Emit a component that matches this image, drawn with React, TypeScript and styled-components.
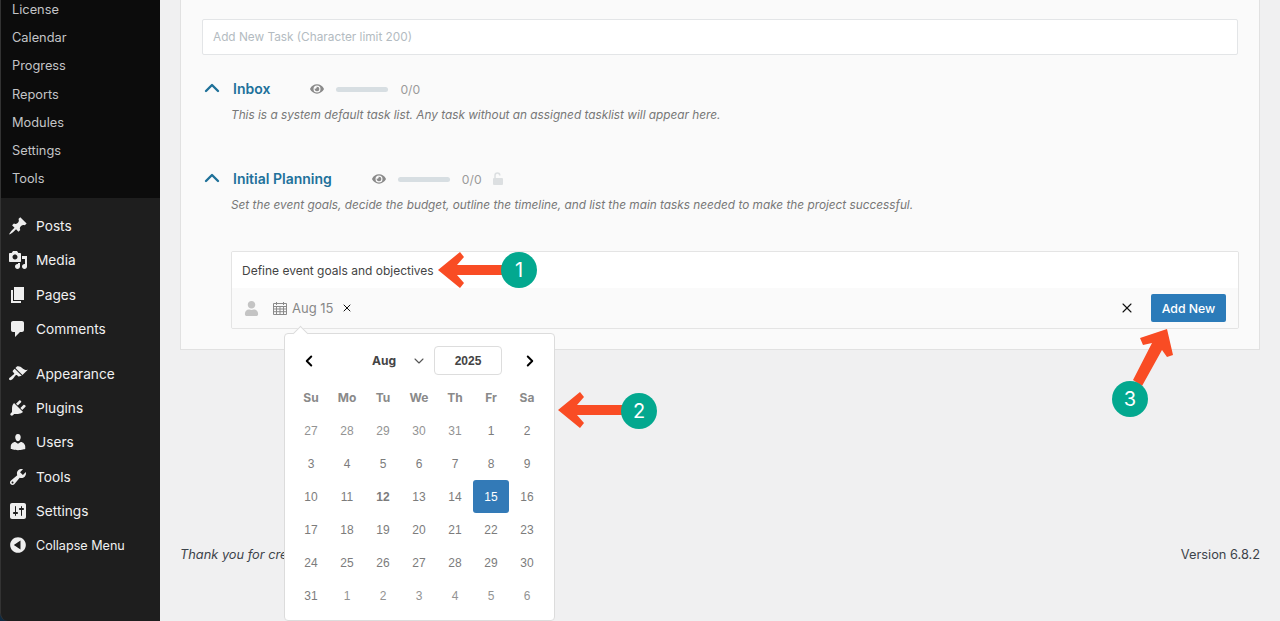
import React from "react";
import styled, { createGlobalStyle } from "styled-components";
import { FaEye, FaUser } from "react-icons/fa";
import { ChevronUp, ChevronLeft, ChevronRight, ChevronDown, X } from "lucide-react";

const Global = createGlobalStyle`
  html, body { margin: 0; padding: 0; height: 621px; overflow: hidden; background: #f0f0f1; }
  * { box-sizing: border-box; }
  #root { height: 621px; font-family: Inter, "Liberation Sans", sans-serif; }
`;

const Page = styled.div`
  position: relative;
  display: flex;
  width: 1280px;
  height: 621px;
  overflow: hidden;
`;
const SideWrap = styled.div`
  width: 160px;
  flex: none;
  background: #0f2b42;
`;
const Sidebar = styled.nav`
  height: 621px;
  background: #1e1e1e;
  border-left: 1px solid #333;
  border-bottom-left-radius: 8px;
  overflow: hidden;
`;
const SubMenu = styled.div`
  height: 198px;
  background: #0c0c0c;
  overflow: hidden;
  padding-left: 11px;
`;
const SubList = styled.div`
  margin-top: -4px;
`;
const SubItem = styled.div`
  height: 28.2px;
  line-height: 28.2px;
  font-size: 12.8px;
  color: #c3c4c7;
`;
const MenuList = styled.div`
  padding-top: 10.8px;
`;
const MenuItem = styled.div<{ $gap?: boolean }>`
  height: 34.3px;
  display: flex;
  align-items: center;
  gap: 8px;
  padding-left: 7px;
  margin-top: ${(p) => (p.$gap ? "10.7px" : "0")};
  font-size: 13.7px;
  color: #f0f0f1;
`;
const MenuIcon = styled.svg`
  width: 20px;
  height: 20px;
  flex: none;
  fill: #eeeeee;
`;
const CollapseLabel = styled.span`
  font-size: 12.6px;
`;

const Main = styled.main`
  flex: 1;
  min-width: 0;
  display: flex;
  flex-direction: column;
  padding: 0 20px;
  height: 621px;
`;
const Panel = styled.section`
  height: 351px;
  margin-top: -1px;
  flex: none;
  background: #fafafa;
  border: 1px solid #e1e1e1;
  padding: 19px 21px 0 21px;
`;
const TaskInput = styled.div`
  height: 36px;
  width: 1036px;
  background: #fff;
  border: 1px solid #e3e5e7;
  border-radius: 2px;
  padding-left: 10px;
  display: flex;
  align-items: center;
  font-size: 11.8px;
  color: #b3bbc1;
`;
const ListBlock = styled.div<{ $top: number }>`
  margin-top: ${(p) => p.$top}px;
  padding-left: 4px;
`;
const ListHead = styled.div`
  display: flex;
  align-items: center;
  height: 20px;
`;
const Caret = styled.span`
  width: 33px;
  margin-left: -6px;
  margin-top: -2px;
  flex: none;
  display: flex;
  color: #1f7199;
`;
const ListTitle = styled.span`
  font-size: 14px;
  font-weight: 600;
  color: #21719b;
  margin-right: 40px;
  margin-top: -2px;
`;
const Eye = styled.span`
  display: flex;
  color: #8a8a8a;
  font-size: 14px;
  margin-right: 12px;
`;
const Bar = styled.span`
  width: 52px;
  height: 5px;
  border-radius: 3px;
  background: #d7dee2;
  margin-right: 12px;
`;
const Count = styled.span`
  font-size: 12.2px;
  color: #9a9a9a;
`;
const LockIcon = styled.svg`
  width: 10px;
  height: 13px;
  margin-left: 11px;
  margin-top: -2px;
`;
const ListDesc = styled.p`
  margin: 8px 0 0 25px;
  font-size: 11.8px;
  line-height: 16px;
  font-style: italic;
  color: #777;
`;
const Form = styled.div`
  margin: 38px 0 0 25px;
  width: 1008px;
  height: 78px;
  border: 1px solid #e4e4e4;
  border-radius: 2px;
  overflow: hidden;
`;
const FormTitle = styled.div`
  height: 36px;
  background: #fff;
  padding-left: 10px;
  display: flex;
  align-items: center;
  font-size: 12px;
  color: #444;
`;
const FormBar = styled.div`
  height: 40px;
  background: #fafafa;
  display: flex;
  align-items: center;
  padding: 0 12px 0 12px;
`;
const Avatar = styled.span`
  display: flex;
  color: #c4c4c4;
  font-size: 15px;
  margin-right: 14px;
`;
const CalIcon = styled.svg`
  width: 14px;
  height: 14px;
  margin-right: 5px;
  fill: none;
  stroke: #8a8a8a;
  stroke-width: 1;
`;
const DateText = styled.span`
  font-size: 13px;
  color: #888;
  margin-right: 8px;
`;
const Remove = styled.span`
  display: flex;
  color: #111;
`;
const Spacer = styled.span`
  flex: 1;
`;
const Cancel = styled.span`
  display: flex;
  color: #111;
  margin-right: 16px;
`;
const AddButton = styled.button`
  width: 75px;
  height: 28px;
  border: 0;
  border-radius: 2px;
  background: #2b7bb9;
  color: #fff;
  font-family: inherit;
  font-size: 12.3px;
  font-weight: 500;
  padding: 0;
`;
const Footer = styled.footer`
  margin-top: 197px;
  display: flex;
  justify-content: space-between;
  font-size: 12.8px;
  line-height: 16px;
  color: #3c434a;
`;
const Thanks = styled.span`
  font-style: italic;
`;

const Popup = styled.div`
  position: absolute;
  left: 284px;
  top: 333px;
  width: 271px;
  height: 288px;
  background: #fff;
  border: 1px solid #dcdcdc;
  border-radius: 4px;
  padding: 0 8px;
  &::before {
    content: "";
    position: absolute;
    left: 10px;
    top: -6px;
    width: 10px;
    height: 10px;
    background: #fff;
    border-left: 1px solid #dcdcdc;
    border-top: 1px solid #dcdcdc;
    transform: rotate(45deg);
  }
`;
const CalHead = styled.div`
  height: 45px;
  margin-top: 4px;
  display: flex;
  align-items: center;
  font-size: 12px;
  font-weight: 700;
  color: #444;
`;
const NavIcon = styled.span<{ $left: number }>`
  display: flex;
  color: #000;
  margin-left: ${(p) => p.$left}px;
`;
const MonthName = styled.span`
  margin-left: 54px;
  margin-right: 15px;
`;
const Chevron = styled.span`
  display: flex;
  color: #555;
  margin-right: 7px;
`;
const YearBox = styled.span`
  width: 68px;
  height: 29px;
  border: 1px solid #ddd;
  border-radius: 4px;
  display: flex;
  align-items: center;
  justify-content: center;
  font-family: "Liberation Sans", Arial, sans-serif;
`;
const Grid = styled.div`
  display: grid;
  grid-template-columns: repeat(7, 36px);
`;
const WeekCell = styled.div`
  height: 31px;
  padding-bottom: 3px;
  display: flex;
  align-items: center;
  justify-content: center;
  font-size: 12px;
  font-weight: 700;
  color: #8a8a8a;
`;
const DayCell = styled.div<{ $muted?: boolean; $today?: boolean; $selected?: boolean }>`
  height: 33px;
  display: flex;
  align-items: center;
  justify-content: center;
  font-family: "Liberation Sans", Arial, sans-serif;
  font-size: 12px;
  border-radius: 3px;
  font-weight: ${(p) => (p.$today ? 700 : 400)};
  color: ${(p) => (p.$selected ? "#fff" : p.$muted ? "#939393" : "#7c7c7c")};
  background: ${(p) => (p.$selected ? "#337ab7" : "transparent")};
`;
const Arrows = styled.svg`
  position: absolute;
  left: 0;
  top: 0;
  width: 1280px;
  height: 621px;
  fill: #f94c24;
  pointer-events: none;
`;
const Badge = styled.span<{ $x: number; $y: number }>`
  position: absolute;
  left: ${(p) => p.$x - 18}px;
  top: ${(p) => p.$y - 18}px;
  width: 36px;
  height: 36px;
  border-radius: 50%;
  background: #03a88f;
  color: #fff;
  display: flex;
  align-items: center;
  justify-content: center;
  font-size: 20px;
`;

const sub = ["License", "Calendar", "Progress", "Reports", "Modules", "Settings", "Tools"];
const icons: Record<string, string> = {
  Posts: "M10.44 3.02l1.82-1.82 6.36 6.35-1.83 1.82c-1.05-.68-2.48-.57-3.41.36l-.75.75c-.92.93-1.04 2.35-.35 3.41l-1.83 1.82-2.41-2.41-2.8 2.79c-.42.42-3.38 2.71-3.8 2.29s1.86-3.39 2.28-3.81l2.79-2.79L4.1 9.36l1.83-1.82c1.05.69 2.48.57 3.4-.36l.75-.75c.93-.92 1.05-2.35.36-3.41z",
  Media: "M13 11V4c0-.55-.45-1-1-1h-1.67L9 1H5L3.67 3H2c-.55 0-1 .45-1 1v7c0 .55.45 1 1 1h10c.55 0 1-.45 1-1zM7 4.5c1.38 0 2.5 1.12 2.5 2.5S8.38 9.5 7 9.5 4.5 8.38 4.5 7 5.62 4.5 7 4.5zM14 6h5v10.5c0 1.38-1.12 2.5-2.5 2.5S14 17.88 14 16.5s1.12-2.5 2.5-2.5c.17 0 .34.02.5.05V9h-3V6zm-4 8.05V13h2v3.5c0 1.38-1.12 2.5-2.5 2.5S7 17.88 7 16.5 8.12 14 9.5 14c.17 0 .34.02.5.05z",
  Pages: "M6 15V2h10v13H6zm-1 1h8v2H3V5h2v11z",
  Comments: "M5 2h9c1.1 0 2 .9 2 2v7c0 1.1-.9 2-2 2h-2l-5 5v-5H5c-1.1 0-2-.9-2-2V4c0-1.1.9-2 2-2z",
  Appearance: "M14.48 11.06L7.41 3.99l1.5-1.5c.5-.56 2.3-.47 3.51.32 1.21.8 1.43 1.28 2.91 2.1 1.18.64 2.45 1.26 4.45.85zm-.71.71L6.7 4.7 4.93 6.47c-.39.39-.39 1.02 0 1.41l1.06 1.06c.39.39.39 1.03 0 1.42-.6.6-1.43 1.11-2.21 1.69-.35.26-.7.53-1.01.84C1.43 13.23.4 14.84 1.33 15.8c.95.94 2.57-.09 3.81-1.33.31-.31.58-.66.85-1.02.57-.78 1.08-1.61 1.69-2.21.39-.39 1.02-.39 1.41 0l1.06 1.06c.39.39 1.02.39 1.41 0z",
  Plugins: "M13.11 4.36L9.87 7.6 8 5.73l3.24-3.24c.35-.34 1.05-.2 1.56.32.52.51.66 1.21.31 1.55zm-8 1.77l.91-1.12 9.01 9.01-1.19.84c-.71.71-2.63 1.16-3.82 1.16H6.14L4.9 17.26c-.59.59-1.54.59-2.12 0-.59-.58-.59-1.53 0-2.12l1.24-1.24v-3.88c0-1.13.4-3.19 1.09-3.89zm7.26 3.97l3.24-3.24c.34-.35 1.04-.21 1.55.31.52.51.66 1.21.31 1.55l-3.24 3.25z",
  Users: "M10 9.25c-2.27 0-2.73-3.44-2.73-3.44C7 4.02 7.82 2 9.97 2c2.16 0 2.98 2.02 2.71 3.81 0 0-.41 3.44-2.68 3.44zm0 2.57L12.72 10c2.39 0 4.52 2.33 4.52 4.53v2.49s-3.65 1.13-7.24 1.13c-3.65 0-7.24-1.13-7.24-1.13v-2.49c0-2.25 1.94-4.48 4.47-4.48z",
  Tools: "M16.68 9.77c-1.34 1.34-3.3 1.67-4.95.99l-5.41 6.52c-.99.99-2.59.99-3.58 0s-.99-2.59 0-3.57l6.52-5.42c-.68-1.65-.35-3.61.99-4.95 1.28-1.28 3.12-1.62 4.72-1.06l-2.89 2.89 2.82 2.82 2.86-2.87c.53 1.58.18 3.39-1.08 4.65zM3.81 16.21c.4.39 1.04.39 1.43 0 .4-.4.4-1.04 0-1.43-.39-.4-1.03-.4-1.43 0-.39.39-.39 1.03 0 1.43z",
  Settings: "M18 16V4c0-1.1-.9-2-2-2H4c-1.1 0-2 .9-2 2v12c0 1.1.9 2 2 2h12c1.1 0 2-.9 2-2zM8 11h1c.55 0 1 .45 1 1s-.45 1-1 1H8v1.5c0 .28-.22.5-.5.5s-.5-.22-.5-.5V13H6c-.55 0-1-.45-1-1s.45-1 1-1h1V5.5c0-.28.22-.5.5-.5s.5.22.5.5V11zm5-2h-1c-.55 0-1-.45-1-1s.45-1 1-1h1V5.5c0-.28.22-.5.5-.5s.5.22.5.5V7h1c.55 0 1 .45 1 1s-.45 1-1 1h-1v5.5c0 .28-.22.5-.5.5s-.5-.22-.5-.5V9z",
  Collapse: "M10 2.16c4.33 0 7.84 3.51 7.84 7.84s-3.51 7.84-7.84 7.84S2.16 14.33 2.16 10 5.67 2.16 10 2.16zM12.5 14.5v-9L5.8 10z",
};
const menu = ["Posts", "Media", "Pages", "Comments", "Appearance", "Plugins", "Users", "Tools", "Settings"];
const weeks = ["Su", "Mo", "Tu", "We", "Th", "Fr", "Sa"];
const days: [number, boolean][] = [
  ...[27, 28, 29, 30, 31].map((d) => [d, true] as [number, boolean]),
  ...Array.from({ length: 31 }, (_, i) => [i + 1, false] as [number, boolean]),
  ...[1, 2, 3, 4, 5, 6].map((d) => [d, true] as [number, boolean]),
];

function Icon({ name }: { name: string }) {
  return (
    <MenuIcon viewBox="0 0 20 20">
      <path d={icons[name]} />
    </MenuIcon>
  );
}

function UpCaret() {
  return (
    <Caret>
      <ChevronUp size={24} strokeWidth={2.4} />
    </Caret>
  );
}

export default function App() {
  return (
    <Page>
      <Global />
      <SideWrap>
        <Sidebar>
          <SubMenu>
            <SubList>
              {sub.map((s) => (
                <SubItem key={s}>{s}</SubItem>
              ))}
            </SubList>
          </SubMenu>
          <MenuList>
            {menu.map((m) => (
              <MenuItem key={m} $gap={m === "Appearance"}>
                <Icon name={m} />
                <span>{m}</span>
              </MenuItem>
            ))}
            <MenuItem>
              <Icon name="Collapse" />
              <CollapseLabel>Collapse Menu</CollapseLabel>
            </MenuItem>
          </MenuList>
        </Sidebar>
      </SideWrap>
      <Main>
        <Panel>
          <TaskInput>Add New Task (Character limit 200)</TaskInput>
          <ListBlock $top={24}>
            <ListHead>
              <UpCaret />
              <ListTitle>Inbox</ListTitle>
              <Eye><FaEye /></Eye>
              <Bar />
              <Count>0/0</Count>
            </ListHead>
            <ListDesc>This is a system default task list. Any task without an assigned tasklist will appear here.</ListDesc>
          </ListBlock>
          <ListBlock $top={46}>
            <ListHead>
              <UpCaret />
              <ListTitle>Initial Planning</ListTitle>
              <Eye><FaEye /></Eye>
              <Bar />
              <Count>0/0</Count>
              <LockIcon viewBox="0 0 10 13">
                <path d="M2 6.5V3.4a2.4 2.4 0 0 1 4.8 0" fill="none" stroke="#dcdfe1" strokeWidth="1.5" />
                <rect x="0" y="6" width="10" height="7" rx="1" fill="#dcdfe1" />
              </LockIcon>
            </ListHead>
            <ListDesc>Set the event goals, decide the budget, outline the timeline, and list the main tasks needed to make the project successful.</ListDesc>
            <Form>
              <FormTitle>Define event goals and objectives</FormTitle>
              <FormBar>
                <Avatar><FaUser /></Avatar>
                <CalIcon viewBox="0 0 14 14">
                  <path d="M.5 2.5h13v11H.5zM.5 5.5h13M.5 8h13M.5 10.7h13M3.5 5.5v8M7 5.5v8M10.5 5.5v8M3.5 1v3M10.5 1v3" />
                </CalIcon>
                <DateText>Aug 15</DateText>
                <Remove><X size={12} strokeWidth={2} /></Remove>
                <Spacer />
                <Cancel><X size={16} strokeWidth={1.6} /></Cancel>
                <AddButton>Add New</AddButton>
              </FormBar>
            </Form>
          </ListBlock>
        </Panel>
        <Footer>
          <Thanks>Thank you for cre</Thanks>
          <span>Version 6.8.2</span>
        </Footer>
      </Main>
      <Popup>
        <CalHead>
          <NavIcon $left={7}><ChevronLeft size={18} strokeWidth={2.6} /></NavIcon>
          <MonthName>Aug</MonthName>
          <Chevron><ChevronDown size={16} strokeWidth={1.6} /></Chevron>
          <YearBox>2025</YearBox>
          <NavIcon $left={19}><ChevronRight size={18} strokeWidth={2.6} /></NavIcon>
        </CalHead>
        <Grid>
          {weeks.map((w) => (
            <WeekCell key={w}>{w}</WeekCell>
          ))}
          {days.map(([d, muted], i) => (
            <DayCell key={i} $muted={muted} $today={!muted && d === 12} $selected={!muted && d === 15}>
              {d}
            </DayCell>
          ))}
        </Grid>
      </Popup>
      <Arrows viewBox="0 0 1280 621">
        <polygon points="438,270 460,252 464,257 457,265 506,265 506,275 457,275 464,283 460,288" />
        <polygon points="558,410 580,392 584,397 577,405 626,405 626,415 577,415 584,423 580,428" />
        <polygon points="1167,329 1140,338 1143,345 1152,343 1133,380 1142,386 1162,350 1167,357 1173,355" />
      </Arrows>
      <Badge $x={519} $y={270}>1</Badge>
      <Badge $x={639} $y={411}>2</Badge>
      <Badge $x={1130} $y={399}>3</Badge>
    </Page>
  );
}
